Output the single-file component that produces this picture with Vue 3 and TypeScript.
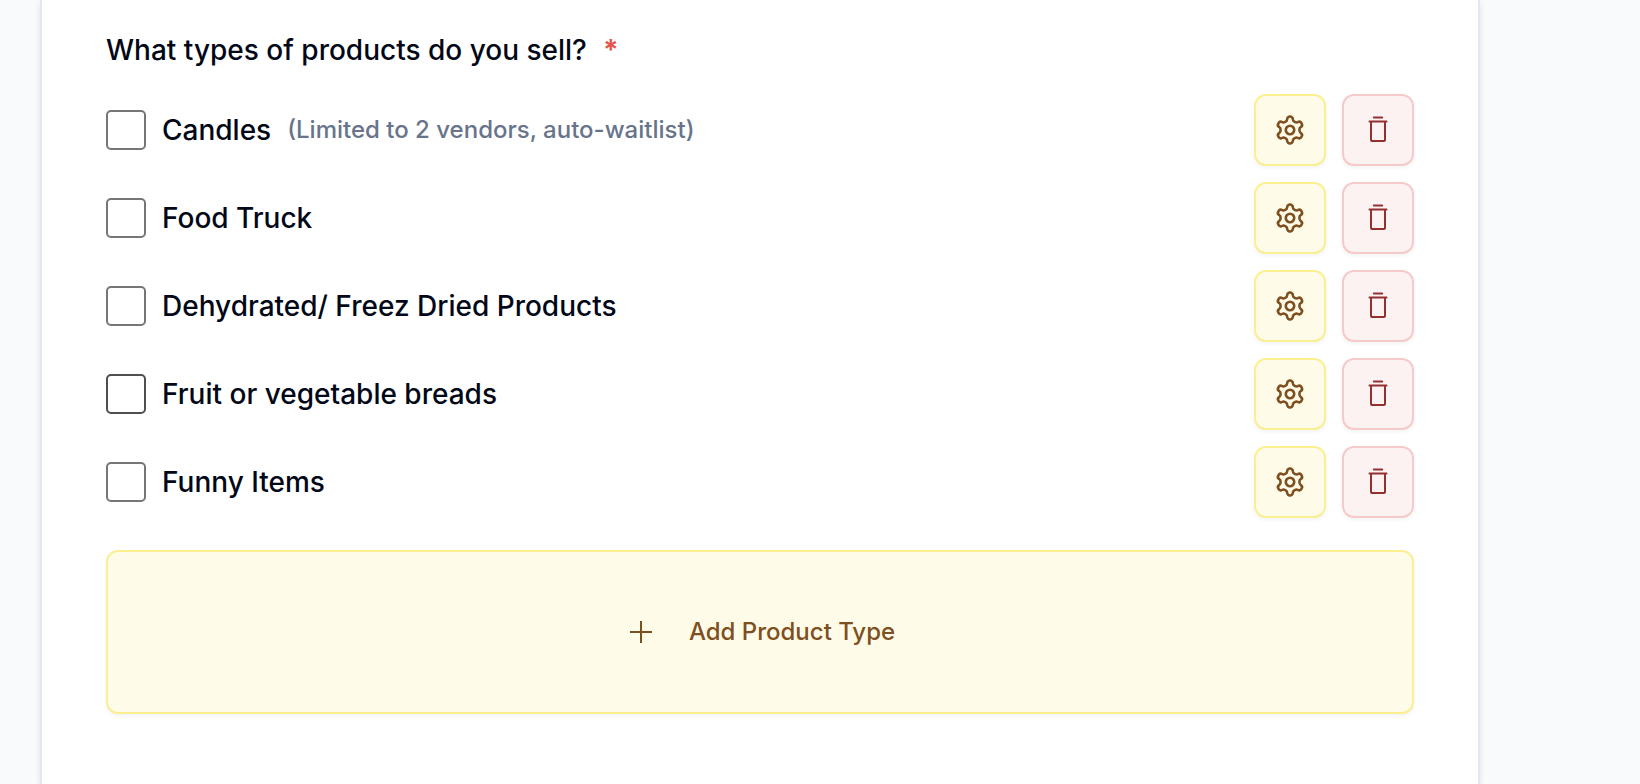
<script setup lang="ts">
import { ref } from 'vue'

interface ProductType {
  id: string
  name: string
  note?: string
  checked: boolean
  active?: boolean
}

const products = ref<ProductType[]>([
  { id: 'candles', name: 'Candles', note: '(Limited to 2 vendors, auto-waitlist)', checked: false },
  { id: 'food-truck', name: 'Food Truck', checked: false },
  { id: 'dried', name: 'Dehydrated/ Freez Dried Products', checked: false },
  { id: 'breads', name: 'Fruit or vegetable breads', checked: false, active: true },
  { id: 'funny', name: 'Funny Items', checked: false },
])

function remove(id: string) {
  products.value = products.value.filter((p) => p.id !== id)
}

// Gear outline: one rounded tooth repeated six times around the centre.
function gearPath(): string {
  const at = (x: number, y: number, turn: number) => {
    const a = (turn * Math.PI) / 3
    const px = x * Math.cos(a) - y * Math.sin(a)
    const py = x * Math.sin(a) + y * Math.cos(a)
    return `${px.toFixed(2)} ${py.toFixed(2)}`
  }
  let d = `M${at(-4.7, -8.14, 0)}`
  for (let k = 0; k < 6; k++) {
    d += `C${at(-3.4, -8.89, k)} ${at(-2.9, -9.3, k)} ${at(-2.9, -10.6, k)}`
    d += `A2.9 2.9 0 0 1 ${at(2.9, -10.6, k)}`
    d += `C${at(2.9, -9.3, k)} ${at(3.4, -8.89, k)} ${at(4.7, -8.14, k)}`
  }
  return d + 'Z'
}
const gear = gearPath()
</script>

<template>
  <main class="page">
    <form class="card" @submit.prevent>
      <fieldset class="question">
        <legend class="title">What types of products do you sell?<span class="required">*</span></legend>
        <ul class="options">
          <li v-for="p in products" :key="p.id" class="option">
            <label class="choice" :for="p.id">
              <input :id="p.id" v-model="p.checked" type="checkbox" class="box" :class="{ active: p.active }" />
              <span>{{ p.name }}</span>
              <span v-if="p.note" class="note">{{ p.note }}</span>
            </label>
            <button type="button" class="icon-button settings" :aria-label="`Settings for ${p.name}`">
              <svg width="32" height="32" viewBox="-16 -16 32 32" fill="none" stroke="currentColor" stroke-width="2.6" stroke-linejoin="round">
                <path :d="gear" />
                <circle r="4.2" />
              </svg>
            </button>
            <button type="button" class="icon-button delete" :aria-label="`Delete ${p.name}`" @click="remove(p.id)">
              <svg width="32" height="32" viewBox="-16 -16 32 32" fill="none" stroke="currentColor" stroke-width="2" stroke-linecap="round" stroke-linejoin="round">
                <path d="M-4.2 -12.5H4.2M-8.5 -8.5H8.5M-7 -8V10Q-7 11 -6 11H6Q7 11 7 10V-8" />
              </svg>
            </button>
          </li>
        </ul>
      </fieldset>
      <button type="button" class="add">
        <svg width="32" height="32" viewBox="0 0 32 32" fill="none" stroke="currentColor" stroke-width="2">
          <path d="M16 5V27M5 16H27" />
        </svg>
        <span>Add Product Type</span>
      </button>
    </form>
  </main>
</template>

<style>
body {
  background: #f9fafc;
}
</style>

<style scoped>
.page {
  display: flex;
  min-height: 100vh;
  padding: 0 160px 0 40px;
  box-sizing: border-box;
  font-family: Inter, "Liberation Sans", sans-serif;
  font-weight: 500;
  color: #020817;
}
.card {
  flex: 1;
  min-width: 0;
  padding: 30px 64px 64px;
  box-sizing: border-box;
  background: #fff;
  border: solid #e2e8f0;
  border-width: 0 2px;
  box-shadow: 0 2px 6px rgba(0, 0, 0, 0.1);
}
.question {
  min-width: 0;
  margin: 0;
  padding: 0;
  border: 0;
}
.title {
  padding: 0;
  font-size: 28px;
  line-height: 40px;
}
.required {
  margin-left: 16px;
  font-weight: 700;
  color: #e2564f;
}
.options {
  display: flex;
  flex-direction: column;
  gap: 16px;
  margin: 24px 0 32px;
  padding: 0;
  list-style: none;
}
.option {
  display: flex;
  align-items: center;
  gap: 16px;
}
.choice {
  display: flex;
  flex: 1;
  align-items: center;
  gap: 16px;
  font-size: 28px;
  line-height: 40px;
}
.box {
  appearance: none;
  flex: none;
  width: 40px;
  height: 40px;
  margin: 0;
  background: #fff;
  border: 2px solid #767676;
  border-radius: 5px;
}
.box.active,
.box:hover {
  border-color: #4f4f4f;
}
.box:checked {
  background: #854d0e;
}
.note {
  font-size: 24px;
  color: #67748b;
}
.icon-button,
.add {
  display: flex;
  align-items: center;
  justify-content: center;
  padding: 0;
  border: 2px solid;
  border-radius: 12px;
  box-sizing: border-box;
  box-shadow: 0 2px 4px rgba(0, 0, 0, 0.05);
  cursor: pointer;
}
.icon-button {
  flex: none;
  width: 72px;
  height: 72px;
}
.settings,
.add {
  color: #7e4f20;
  background: #fefce8;
  border-color: #fcef92;
}
.delete {
  color: #933030;
  background: #fcf2f2;
  border-color: #f7caca;
}
.add {
  width: 100%;
  gap: 32px;
  padding: 64px;
  font: inherit;
  font-size: 24px;
  line-height: 32px;
}
</style>
